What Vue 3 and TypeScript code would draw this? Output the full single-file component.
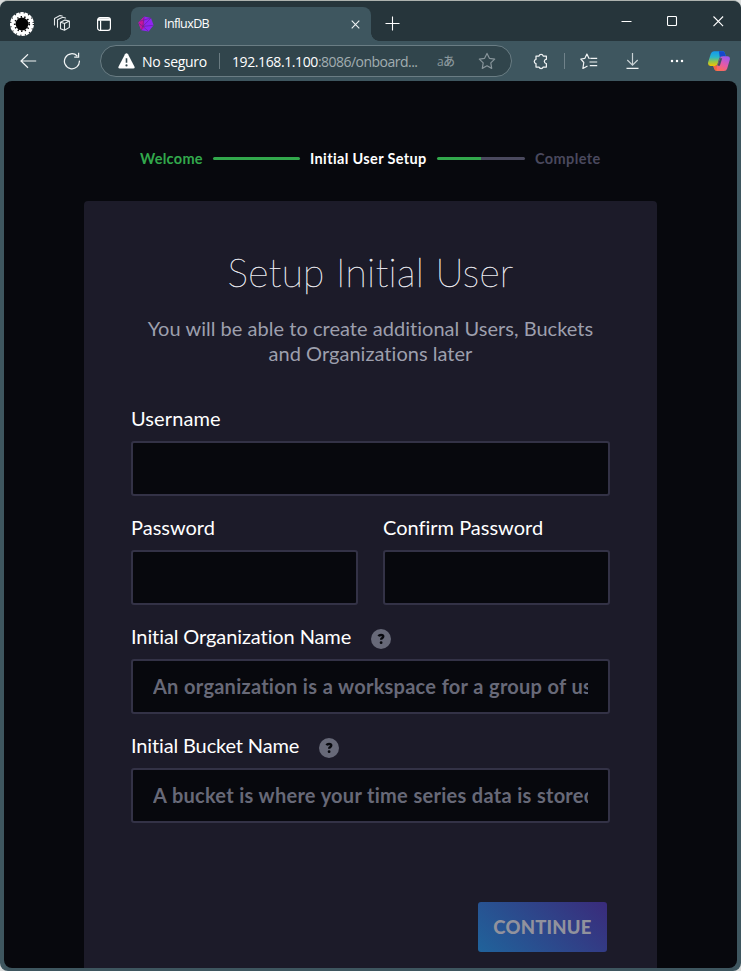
<script setup lang="ts">
interface Field { id: string; label: string; placeholder?: string; help?: boolean; half?: boolean }

const fields: Field[] = [
  { id: 'username', label: 'Username' },
  { id: 'password', label: 'Password', half: true },
  { id: 'confirm', label: 'Confirm Password', half: true },
  { id: 'org', label: 'Initial Organization Name', placeholder: 'An organization is a workspace for a group of users.', help: true },
  { id: 'bucket', label: 'Initial Bucket Name', placeholder: 'A bucket is where your time series data is stored with a retention policy.', help: true },
]
</script>

<template>
  <div class="window">
    <header class="titlebar">
      <div class="chrome-tools">
        <svg class="avatar" viewBox="0 0 26 26">
          <circle cx="13" cy="13" r="12" fill="#fff" />
          <circle cx="13" cy="13" r="6.4" fill="#030303" />
          <circle cx="13" cy="13" r="7.2" fill="none" stroke="#030303" stroke-width="1.8" stroke-dasharray="1.3 2.3" />
          <circle cx="13" cy="13" r="11.4" fill="none" stroke="#1b2225" stroke-width="1.4" stroke-dasharray="1 3.6" />
        </svg>
        <svg class="workspaces" viewBox="0 0 18 18" fill="none" stroke="#e3e8ea" stroke-width="1.1" stroke-linejoin="round" stroke-linecap="round">
          <path d="M7.5 7.3 12 5.1 16.4 6v6.4l-4.9 2.9-4-1.5zM7.5 7.3l4 1.2L16.4 6M11.5 8.5v6.6" />
          <path d="M12.6 3 9.7 2.3 4.5 4.8v7.4M9.2 1 7 .6 1.5 3.4v6.5" />
        </svg>
        <svg class="tabs-icon" viewBox="0 0 16 16" fill="none" stroke="#fff" stroke-width="1.2">
          <rect x="1.6" y="1.6" width="12.8" height="12.8" rx="2.4" />
          <path d="M2 3.5h12" stroke-width="2.6" /><path d="M4.6 4.5v9.7" />
        </svg>
      </div>
      <div class="tab">
        <svg class="favicon" viewBox="0 0 16 16">
          <path d="M6.2.4 13 2l2.6 7.3-5 6.1-7.4-1.1L.4 6.8z" fill="#8f25f2" />
          <path d="M6.2.4.4 6.8l2.8 7.5 3-2.3z" fill="#c9149b" />
          <path d="M6.2.4 4.8 10.4l5.8 5M13 2 4.8 10.4.4 6.8M4.8 10.4l10.8-1.1M4.8 10.4l-1.6 3.9M1.8 5.2 13 2" fill="none" stroke="#5a2590" stroke-width=".6" />
        </svg>
        <span>InfluxDB</span>
        <svg class="tab-close" viewBox="0 0 9 9"><path d="m.7.7 7.6 7.6m0-7.6L.7 8.3" stroke="#eef2f3" stroke-width="1.1" /></svg>
      </div>
      <svg class="new-tab" viewBox="0 0 15 15"><path d="M7.5.5v14M.5 7.5h14" stroke="#fff" stroke-width="1.1" /></svg>
      <div class="controls">
        <svg viewBox="0 0 11 11"><path d="M.5 5.5h10" stroke="#fff" /></svg>
        <svg viewBox="0 0 11 11"><rect x=".5" y=".5" width="9" height="9" rx="1" fill="none" stroke="#fff" stroke-width="1.1" /></svg>
        <svg viewBox="0 0 11 11"><path d="m.5.5 9.6 9.6m0-9.6L.5 10.1" stroke="#fff" stroke-width="1.1" /></svg>
      </div>
    </header>

    <nav class="toolbar">
      <svg class="back" viewBox="0 0 17 15" fill="none" stroke="#f0f3f4" stroke-width="1.2"><path d="M16.2 7H1M8 .3 1 7l7 6.7" /></svg>
      <svg class="reload" viewBox="0 0 18 18" fill="none" stroke="#f0f3f4" stroke-width="1.25"><path d="M16.4 8.6A7.5 7.5 0 1 1 14.3 4M15.6.8v4.4h-4.4" /></svg>
      <div class="address">
        <svg class="warning" viewBox="0 0 17 16"><path d="M7 1.3q1.5-2.2 3 0l6.4 12.1q1 2-1.2 2.1H1.8q-2.2-.1-1.2-2.1z" fill="#fff" /><path d="M8.5 5.3v4.5" stroke="#31454c" stroke-width="1.6" /><circle cx="8.5" cy="12.4" r="1.1" fill="#31454c" /></svg>
        <span class="security">No seguro</span>
        <i class="divider"></i>
        <span class="url"><b>192.168.1.100</b>:8086/onboard...</span>
        <span class="translate">aあ</span>
        <svg class="star" viewBox="0 0 18 18" fill="none" stroke="#87949a" stroke-width="1.2" stroke-linejoin="round"><path d="m9 1.4 2.4 4.9 5.3.8-3.9 3.8.9 5.5L9 13.8l-4.7 2.6.9-5.5-3.9-3.8 5.3-.8z" /></svg>
      </div>
      <svg class="puzzle" viewBox="0 0 16 17" fill="none" stroke="#f0f3f4" stroke-width="1.25" stroke-linejoin="round"><path d="M3 3h3a2.2 2.2 0 0 1 4.2 0h3.2v3.3a2 2 0 0 0-2 2.1 2 2 0 0 0 2 2.1V14h-3.2a2.2 2.2 0 0 1-4.2 0H3v-3.4a2.2 2.2 0 0 1 0-4.3z" /></svg>
      <i class="rule"></i>
      <svg class="favorites" viewBox="0 0 18 17" fill="none" stroke="#f0f3f4" stroke-width="1.2" stroke-linejoin="round"><path d="M9.7 5.3H8.9L6.9 1 4.9 5.3l-4.1.7 3 3.5-.9 6 4.6-2.6M10.3 5.3h6.9M9.5 9h7.7M9.8 12.7h7.4" /></svg>
      <svg class="download" viewBox="0 0 13 16" fill="none" stroke="#f0f3f4" stroke-width="1.2"><path d="M6.5 0v12M1.3 7l5.2 5.2L11.7 7" stroke="#c9d2d5" /><path d="M.5 15.3h12" /></svg>
      <svg class="more" viewBox="0 0 14 4" fill="#fff"><circle cx="2" cy="2" r="1.25" /><circle cx="7" cy="2" r="1.25" /><circle cx="12" cy="2" r="1.25" /></svg>
      <svg class="copilot" viewBox="0 0 22 20">
        <defs>
          <linearGradient id="cp-left" x1=".4" y1="0" x2=".4" y2="1"><stop stop-color="#1399ee" /><stop offset=".4" stop-color="#2ab6ca" /><stop offset=".7" stop-color="#93c64b" /><stop offset="1" stop-color="#f5c400" /></linearGradient>
          <linearGradient id="cp-right" x1=".7" y1="0" x2=".2" y2="1"><stop stop-color="#9f59f0" /><stop offset=".5" stop-color="#e65aa6" /><stop offset="1" stop-color="#ff7048" /></linearGradient>
        </defs>
        <path d="M6 .2h9.2q1.1 0 1.7 2l1 3h-3.8q-2.2 0-2.9 2L9.5 13q-.6 2-2.6 2H2.5Q-.7 15 .2 11L2.8 2.7Q3.6.2 6 .2z" fill="url(#cp-left)" />
        <path d="M11 .2h4.2q1.1 0 1.7 2l1 3h-3.8q-1.6 0-2.4 1z" fill="#1647cc" />
        <path d="M15.2 5.2h4q3.2 0 2.6 3.5l-2.6 8.7q-.8 2.5-3.2 2.5H8.7q-1.8 0-2.5-2.1L5.3 15h2q2 0 2.7-2.2l1.8-5.6q.7-2 3.4-2z" fill="url(#cp-right)" />
        <path d="M12 7.3h2.2l-2.4 7.5H9.5z" fill="#415466" />
        <path d="M5.3 15h2q1.2 0 2-1l-.9 5.8q-1.6 0-2.2-2z" fill="#f26543" />
      </svg>
    </nav>

    <main class="page">
      <div class="stepper">
        <span class="step done">Welcome</span><i class="bar full"></i>
        <span class="step current">Initial User Setup</span><i class="bar partial"></i>
        <span class="step pending">Complete</span>
      </div>
      <section class="card">
        <h1>Setup Initial User</h1>
        <p class="subtitle">You will be able to create additional Users, Buckets<br />and Organizations later</p>
        <form class="form" @submit.prevent>
          <div v-for="field in fields" :key="field.id" class="field" :class="[field.id, { half: field.half }]">
            <label :for="field.id"><span>{{ field.label }}</span>
              <svg v-if="field.help" class="help" viewBox="0 0 20 20"><circle cx="10" cy="10" r="10" fill="#676978" /><path d="M7.5 7.3q.6-1.3 2.5-1.3 2.3 0 2.3 1.6 0 1-1.1 1.5-1.1.5-1.1 1.7" fill="none" stroke="#07080d" stroke-width="2.3" /><circle cx="10.1" cy="13.7" r="1.4" fill="#07080d" /></svg>
            </label>
            <input :id="field.id" :type="field.half ? 'password' : 'text'" :placeholder="field.placeholder" />
          </div>
          <button type="submit" class="continue">CONTINUE</button>
        </form>
      </section>
    </main>
  </div>
</template>

<style>
body { background: #d9dcdc; overflow: hidden; }
</style>

<style scoped>
* { box-sizing: border-box; }
svg { display: block; flex: none; }
.window { width: 741px; height: 971px; padding-bottom: 3px; display: flex; flex-direction: column; overflow: hidden; border-top: 1px solid #adb2ae; border-radius: 8px; background: #3e565f; font-family: "Open Sans", "Noto Sans CJK JP", sans-serif; color: #fff; }
.titlebar { height: 40px; flex: none; display: flex; background: #26353b; }
.chrome-tools { width: 131px; height: 40px; padding: 5px 0 0 9px; display: flex; align-items: center; }
.avatar { width: 26px; height: 26px; }
.workspaces { width: 18px; height: 18px; margin-left: 18px; }
.tabs-icon { width: 16px; height: 16px; margin-left: 25px; }
.tab { width: 240px; height: 34px; margin-top: 6px; padding: 0 11px 0 7px; display: flex; align-items: center; background: #3e565f; border-radius: 8px 8px 0 0; position: relative; }
.tab span { padding-bottom: 1px; letter-spacing: -.6px; font-size: 12.5px; }
.tab::before, .tab::after { content: ""; position: absolute; bottom: 0; width: 8px; height: 8px; }
.tab::before { left: -8px; background: radial-gradient(circle at 0 0, #26353b 7.5px, #3e565f 8px); }
.tab::after { right: -8px; background: radial-gradient(circle at 100% 0, #26353b 7.5px, #3e565f 8px); }
.favicon { width: 16px; height: 16px; margin-right: 10px; }
.tab-close { width: 9px; height: 9px; margin-left: auto; }
.new-tab { width: 15px; height: 15px; margin: 15px 0 0 14px; }
.controls { display: flex; gap: 35px; margin: 15px 17px 0 auto; }
.controls svg { width: 11px; height: 11px; }
.toolbar { height: 40px; flex: none; display: flex; align-items: center; padding: 0 11px 0 20px; }
.back { width: 17px; height: 15px; }
.reload { width: 18px; height: 18px; margin-left: 26px; }
.address { width: 412px; height: 32px; margin-left: 19px; padding: 0 15px 0 17px; display: flex; align-items: center; border: 1px solid #6a7d84; border-radius: 16px; background: #31454c; font-size: 14px; white-space: nowrap; }
.warning { width: 17px; height: 16px; }
.security { width: 68px; margin-left: 7px; letter-spacing: -.28px; }
.divider { width: 1px; height: 16px; margin: 0 12px 0 9px; background: #6a7b81; }
.url { width: 188px; color: #a2adb1; letter-spacing: -.52px; }
.url b { font-weight: 400; color: #fff; letter-spacing: -.4px; }
.translate { width: 23px; margin-left: 17px; color: #8b989d; font-size: 12px; font-weight: 500; letter-spacing: -.6px; }
.star { width: 18px; height: 18px; margin-left: auto; }
.puzzle { width: 16px; height: 17px; margin-left: 21px; }
.rule { width: 1px; height: 16px; margin-left: 15px; background: #70828a; }
.favorites { width: 18px; height: 17px; margin-left: 15px; }
.download { width: 13px; height: 16px; margin-left: 28px; }
.more { width: 14px; height: 4px; margin-left: 31px; }
.copilot { width: 22px; height: 20px; margin-left: auto; }

.page { flex: 1; min-height: 0; margin: 0 4px; padding: 67px 80px 0; overflow: hidden; display: flex; flex-direction: column; background: #07080d; border-radius: 8px; font-family: Lato, sans-serif; font-variant-ligatures: none; }
.stepper { height: 20px; flex: none; margin-bottom: 33px; padding-left: 56px; display: flex; align-items: center; font-size: 14.5px; font-weight: 700; white-space: nowrap; }
.step { line-height: 22px; padding-top: 1px; }
.done { width: 63px; color: #32a84c; letter-spacing: .3px; }
.current { width: 117px; letter-spacing: .36px; }
.pending { color: #4a495e; letter-spacing: .4px; }
.bar { width: 88px; height: 3px; margin: 0 10px; border-radius: 2px; background: #32a84c; }
.bar.full { width: 87px; }
.bar.partial { background: linear-gradient(90deg, #32a84c 50%, #4a495e 50%); }
.card { flex: 1; min-height: 0; padding: 47px 47px 0; border-radius: 4px 4px 0 0; background: #1c1b29; }
h1 { height: 48px; margin: 0; font-size: 39px; line-height: 48px; font-weight: 200; letter-spacing: .3px; text-align: center; color: #ececf2; -webkit-text-stroke: .4px #ececf2; white-space: nowrap; }
.subtitle { margin: 20px 0 0; color: #9d9fad; font-size: 20px; line-height: 25px; letter-spacing: .03px; text-align: center; white-space: nowrap; }
.form { margin-top: 21px; display: grid; grid-template-columns: 227px 227px; column-gap: 25px; }
.field { grid-column: 1 / -1; min-width: 0; }
.field.half { grid-column: auto; }
label { height: 28px; margin: 18px 0 8px; display: flex; align-items: center; font-size: 20px; white-space: nowrap; }
label span { padding-bottom: 2px; }
.username label { letter-spacing: .1px; }
.org label { letter-spacing: -.1px; }
.bucket label { letter-spacing: -.14px; }
.help { width: 20px; height: 20px; margin: 4px 0 0 20px; }
input { display: block; width: 100%; height: 55px; padding: 0 20px 2px; border: 2px solid #333246; border-radius: 3px; outline: 0; background: #07080d; color: #fff; font: 700 20px Lato, sans-serif; letter-spacing: .25px; word-spacing: .3px; font-variant-ligatures: none; }
input::placeholder { color: #676978; opacity: 1; }
.continue { grid-column: 2; justify-self: end; width: 129px; height: 50px; margin: 79px 3px 0 0; padding: 0; border: 0; border-radius: 3px; background: linear-gradient(45deg, #20639b, #3a2b7b); color: #91929d; font: 900 18.5px Lato, sans-serif; letter-spacing: .2px; }
</style>
